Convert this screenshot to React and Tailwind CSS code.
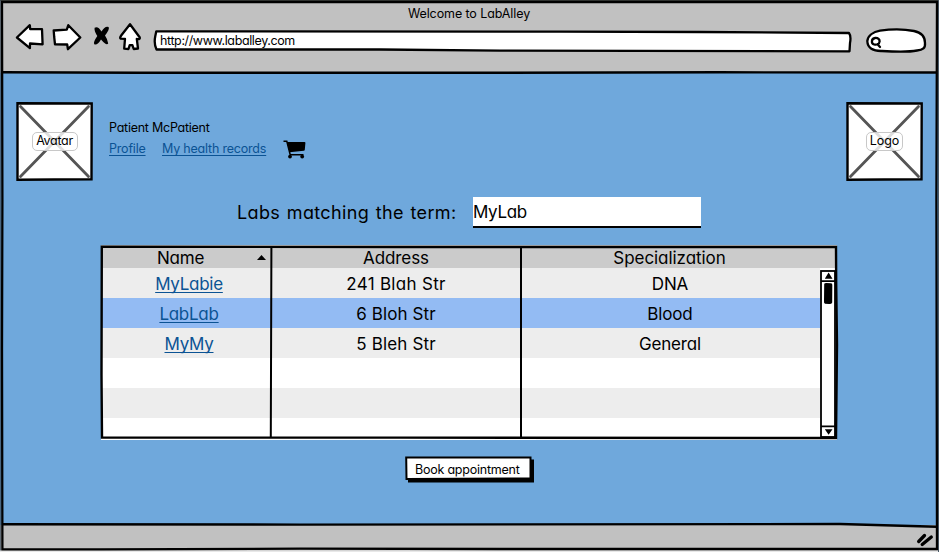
const rows = [
  { name: "MyLabie", address: "241 Blah Str", field: "DNA", shade: "bg-[#ededed]", addressText: "tracking-[0.3px]" },
  { name: "LabLab", address: "6 Bloh Str", field: "Blood", shade: "bg-[#93bbf3]", addressText: "tracking-[0.1px]" },
  { name: "MyMy", address: "5 Bleh Str", field: "General", shade: "bg-[#ededed]", addressText: "tracking-[0.15px]" },
];

const link = "text-[#0b5394] underline decoration-[1.3px] underline-offset-[2px] [text-decoration-skip-ink:none]";

function WindowFrame() {
  return (
    <svg className="pointer-events-none absolute inset-0" width="939" height="552" viewBox="0 0 939 552" fill="none">
      <path d="M0 0.500 H939" stroke="#3f433f" strokeWidth="1" />
      <path d="M0 0 V552" stroke="#3a4a58" strokeWidth="1.4" />
      <path d="M0 551.300 H939" stroke="#e8e8e8" strokeWidth="1.6" />
      <path d="M938.500 0 V552" stroke="#4a5a68" strokeWidth="1" />
      <path d="M2 2 L937 2 L936.400 200 L937 549 L500 549 L300 548.700 L100 549.300 L2.400 549.300 L2 350 L2.400 200 Z" stroke="#000" strokeWidth="2.300" />
      <path d="M2 72.300 L140 72.700 L500 72.700 L720 72.300 L937 72.500" stroke="#000" strokeWidth="2.400" />
      <path d="M2 524.300 L300 524.600 L840 524 L937 526.700" stroke="#000" strokeWidth="2.400" />
    </svg>
  );
}

function NavIcons() {
  return (
    <svg className="shrink-0" width="130" height="32" viewBox="14 22 130 32" fill="#fff" stroke="#000" strokeWidth="2.300" strokeLinejoin="round" strokeLinecap="round">
      <path d="M16.900 37.500 L29.800 25.200 L30.200 29.200 L42 29.200 L42.600 44.300 L30 43.500 L29.900 48.200 Z" />
      <path d="M53.700 30.500 L66.800 29.600 L68.300 25.200 L80.300 37.500 L67.900 49.200 L67.200 44.500 L55 44.300 L54.200 37 Z" />
      <path d="M94.600 27.800 Q98 25.800 101.500 31.500 Q105 25.600 108.600 27 Q110 29 105 35.500 Q107.500 39 108.200 43.500 Q106.500 46 101 39.500 Q97.500 45.500 94.300 44.300 Q92.800 42.500 97.300 36 Q94 31 94.600 27.800 Z" fill="#000" stroke="none" />
      <path d="M130 24.200 L139.800 37.500 Q140.300 39.600 136.800 38.800 L138 48.500 L133.700 49 L132.400 45.200 L129.700 45.200 L128.500 49 L124.200 48.700 L125 38.800 L120.700 38.700 Q119.400 38 121.200 35.500 Z" />
    </svg>
  );
}

function Placeholder({ label, text }) {
  return (
    <div className="relative flex h-[79px] w-[77px] shrink-0 items-center justify-center">
      <svg className="absolute inset-0" width="77" height="79" viewBox="0 0 77 79">
        <path d="M1.500 1.300 L75.700 1.500 L75.500 77.300 L1.500 77.700 Z" fill="#fff" stroke="#000" strokeWidth="2.400" />
        <path d="M4.500 4.500 L72.500 74.500 M72.500 4.500 L4.500 74.500" stroke="#555" strokeWidth="2.800" strokeLinecap="round" />
      </svg>
      <span className={`relative rounded-[5px] border border-[#c8c8c8] bg-white/80 pb-px text-center leading-[16.500px] ${text}`}>
        {label}
      </span>
    </div>
  );
}

function Cart() {
  return (
    <svg className="mt-[2px] ml-[16px]" width="23" height="19" viewBox="0 0 23 19" fill="none" stroke="#000">
      <path d="M0.500 1.200 H3.800 L7.200 14.800 H20.500" strokeWidth="1.500" />
      <path d="M4 2 H21.500 Q22.600 2 22.400 3 L21.800 9.800 Q21.700 10.600 20.800 10.700 L6.500 12.300 Z" fill="#000" stroke="none" />
      <circle cx="7" cy="16.600" r="1.900" fill="#000" stroke="none" />
      <circle cx="19.200" cy="16.600" r="1.900" fill="#000" stroke="none" />
    </svg>
  );
}

function Scrollbar() {
  return (
    <svg width="16" height="168" viewBox="0 0 16 168" fill="none" stroke="#000" strokeWidth="1.800">
      <rect x="1" y="1" width="14" height="166" fill="#fff" />
      <path d="M1 11.200 H15 M1 156.300 H15" />
      <path d="M8.600 2.500 L12.500 8.800 H4.800 Z M8.600 164.800 L12.500 159.200 H4.800 Z" fill="#000" stroke="none" />
      <path d="M4.200 14.500 Q3.700 13 6 13 L11 13.200 Q12.400 13.300 12.300 15 L12.200 32.500 Q11.500 34.300 9 34 L5 33.700 Q3.700 33 4 31 Z" fill="#000" stroke="none" />
    </svg>
  );
}

function LabTable() {
  const grid = "grid grid-cols-[170px_250px_299px] text-center";
  return (
    <div className="relative mt-[17px] ml-[101px] h-[195px] w-[736px] bg-white text-[17px] font-[430]">
      <div className={`${grid} h-[23px] bg-[#cbcbcb] pt-px leading-[25px]`}>
        <div className="pr-[11px] tracking-[-0.2px]">Name</div>
        <div className="tracking-[-0.1px]">Address</div>
        <div className="pr-[2px] tracking-[-0.06px]">Specialization</div>
      </div>
      <div className="flex">
        <div className="w-[719px]">
          {rows.map((row) => (
            <div key={row.name} className={`${grid} h-[30px] leading-[32px] ${row.shade}`}>
              <div className="pl-[6px] tracking-[-0.27px]"><a className={link}>{row.name}</a></div>
              <div className={row.addressText}>{row.address}</div>
              <div className="pr-px tracking-[-0.15px]">{row.field}</div>
            </div>
          ))}
          <div className="h-[30px]" />
          <div className="h-[30px] bg-[#ededed]" />
        </div>
        <div className="mt-[2px] h-[168px]"><Scrollbar /></div>
      </div>
      <svg className="pointer-events-none absolute inset-0 overflow-visible" width="736" height="195" viewBox="0 0 736 195" fill="none" stroke="#000" strokeWidth="2">
        <path d="M0.800 1.700 L300 2 L735 2 L735.200 40 L736 100 L735 193 L300 192.600 L1 192.600 L0.500 130 Z" strokeWidth="2.400" />
        <path d="M170.400 3 L169.800 192 M420 3 L420 192" />
        <path d="M156 15 L160.500 10 L165 15 Z" fill="#000" stroke="none" />
      </svg>
    </div>
  );
}

export default function App() {
  return (
    <div className="relative flex h-[552px] w-[939px] flex-col overflow-hidden bg-[#6fa8dc] font-['Inter',sans-serif] text-[12.5px] font-[430] text-black [font-feature-settings:'cv11']">
      <header className="h-[73px] shrink-0 bg-[#c1c1c1]">
        <h1 className="h-[22px] pt-[5px] pr-px text-center leading-[17px] font-[430] tracking-[-0.1px]">Welcome to LabAlley</h1>
        <div className="flex items-start pl-[14px]">
          <NavIcons />
          <div className="relative ml-[9px] h-[24px] w-[700px]">
            <svg className="absolute inset-0" width="700" height="32" viewBox="153 22 700 32">
              <path d="M156.300 31.300 L560 31.700 L700 32 L849 33 Q851.300 36 850 43 L849.500 51.300 L500 50.700 L380 49.500 L156.500 49.500 Q153.700 44 155.300 36 Z" fill="#fff" stroke="#000" strokeWidth="2.300" strokeLinejoin="round" />
            </svg>
            <span className="relative ml-[7px] block pt-[9px] leading-[20px] tracking-[-0.38px]">http://www.laballey.com</span>
          </div>
          <svg className="ml-[12px]" width="64" height="32" viewBox="865 22 64 32" fill="#fff" stroke="#000" strokeWidth="2.300" strokeLinecap="round">
            <path d="M867.300 41 C868 36 873 32 880 30.700 C890 29.300 905 29.300 914 31 C922 32.500 925 37 925 43 C925.500 48 923 50 917 50.500 C907 52.500 895 51.800 882 51 C873 51.300 867.500 48 867.300 41 Z" />
            <path d="M875.200 38 C878 37.700 879.800 39.500 879.600 41.500 C879.300 44.500 876.500 45 874.200 44.500 C871 43.500 871 38.500 875.200 38 Z M877.500 44.300 L880 47" />
          </svg>
        </div>
      </header>

      <main className="flex flex-1 flex-col">
        <section className="flex pt-[29px] pr-4 pl-4">
          <Placeholder label="Avatar" text="w-[46px] tracking-[-0.3px]" />
          <div className="ml-4 flex-1 pt-[15px] leading-[21px]">
            <p className="tracking-[-0.25px]">Patient McPatient</p>
            <nav className="flex">
              <a className={`${link} w-[37px] tracking-[-0.2px]`}>Profile</a>
              <a className={`${link} ml-4 w-[105px] whitespace-nowrap tracking-[-0.2px]`}>My health records</a>
              <Cart />
            </nav>
          </div>
          <Placeholder label="Logo" text="w-[37px] tracking-[-0.1px]" />
        </section>

        <section className="mt-[16px] flex font-normal">
          <label className="ml-[237px] w-[236px] whitespace-nowrap text-[18px] leading-[31px] tracking-[0.36px] [word-spacing:1.200px]">Labs matching the term:</label>
          <div className="h-[31px] w-[228px] border-b-[2.500px] border-black bg-white text-[17px] leading-[31px] tracking-[-0.35px]">MyLab</div>
        </section>

        <LabTable />

        <button className="relative mt-[16px] ml-[405px] h-[27px] w-[130px] text-left">
          <svg className="absolute inset-0" width="130" height="27" viewBox="0 0 130 27">
            <path d="M3 3.500 H129 V26.500 H3 Z" />
            <path d="M1.200 1.500 L125.500 1.500 L125.500 22.500 L1.500 23 Z" fill="#fff" stroke="#000" strokeWidth="2" />
          </svg>
          <span className="relative block pl-[10px] leading-[23px] tracking-[-0.23px]">Book appointment</span>
        </button>
      </main>

      <footer className="flex h-[27px] shrink-0 justify-end bg-[#c1c1c1]">
        <svg className="mt-[7px] mr-[4px]" width="20" height="16" viewBox="0 0 20 16" stroke="#000" strokeWidth="3.300" strokeLinecap="round">
          <path d="M3.700 9.500 L9.500 3.500 M7.200 12.500 L16.300 5" />
        </svg>
      </footer>
      <WindowFrame />
    </div>
  );
}
